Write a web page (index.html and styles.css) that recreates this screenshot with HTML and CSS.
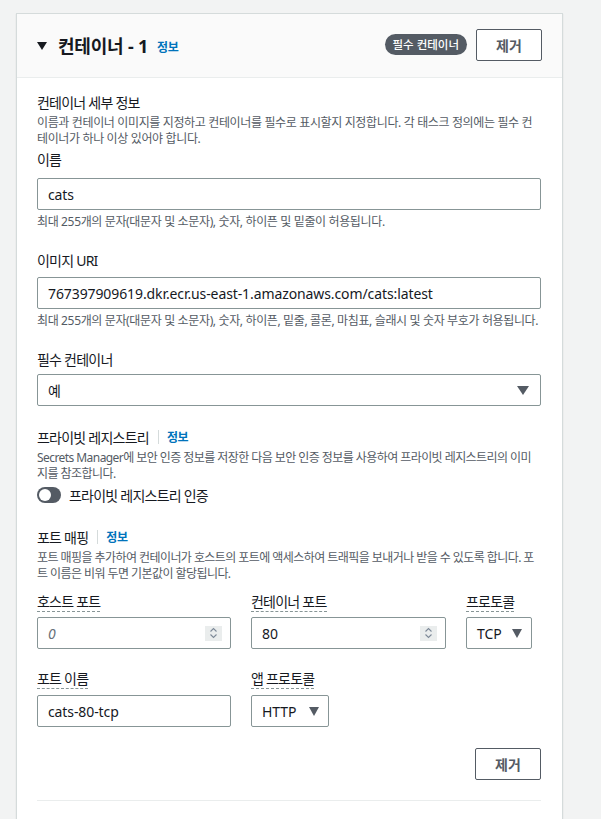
FILE: index.html
```html
<!DOCTYPE html>
<html lang="ko">
<head>
<meta charset="utf-8">
<link rel="stylesheet" href="styles.css">
</head>
<body>
<div class="card">
  <div class="card-header">
    <div class="title-wrap">
      <span class="caret"></span>
      <h2 class="title">컨테이너 - 1</h2>
      <a class="info">정보</a>
    </div>
    <div class="header-actions">
      <span class="badge">필수 컨테이너</span>
      <button class="btn">제거</button>
    </div>
  </div>
  <div class="card-body">
    <h3 class="section-title">컨테이너 세부 정보</h3>
    <p class="desc">이름과 컨테이너 이미지를 지정하고 컨테이너를 필수로 표시할지 지정합니다. 각 태스크 정의에는 필수 컨테이너가 하나 이상 있어야 합니다.</p>

    <label class="label l-name">이름</label>
    <div class="input latin first">cats</div>
    <p class="hint">최대 255개의 문자(대문자 및 소문자), 숫자, 하이픈 및 밑줄이 허용됩니다.</p>

    <label class="label l-field">이미지 URI</label>
    <div class="input latin">767397909619.dkr.ecr.us-east-1.amazonaws.com/cats:latest</div>
    <p class="hint">최대 255개의 문자(대문자 및 소문자), 숫자, 하이픈, 밑줄, 콜론, 마침표, 슬래시 및 숫자 부호가 허용됩니다.</p>

    <label class="label l-field">필수 컨테이너</label>
    <div class="input select tight"><span>예</span><span class="tri"></span></div>

    <div class="label-row l-section">
      <span class="label-text">프라이빗 레지스트리</span>
      <span class="sep"></span>
      <a class="info">정보</a>
    </div>
    <p class="desc desc2">Secrets Manager에 보안 인증 정보를 저장한 다음 보안 인증 정보를 사용하여 프라이빗 레지스트리의 이미지를 참조합니다.</p>
    <div class="toggle-row">
      <span class="toggle"><span class="knob"></span></span>
      <span class="toggle-label">프라이빗 레지스트리 인증</span>
    </div>

    <div class="label-row l-section2">
      <span class="label-text">포트 매핑</span>
      <span class="sep"></span>
      <a class="info">정보</a>
    </div>
    <p class="desc desc2">포트 매핑을 추가하여 컨테이너가 호스트의 포트에 액세스하여 트래픽을 보내거나 받을 수 있도록 합니다. 포트 이름은 비워 두면 기본값이 할당됩니다.</p>

    <div class="port-grid">
      <div class="col">
        <span class="label u">호스트 포트</span>
        <div class="input num latin"><span class="ph">0</span><span class="spin"><svg width="9" height="12" viewBox="0 0 9 12"><path d="M1.5 4.5 L4.5 1.5 L7.5 4.5 M1.5 7.5 L4.5 10.5 L7.5 7.5" fill="none" stroke="#7d8998" stroke-width="1.1"/></svg></span></div>
      </div>
      <div class="col">
        <span class="label u">컨테이너 포트</span>
        <div class="input num latin"><span>80</span><span class="spin"><svg width="9" height="12" viewBox="0 0 9 12"><path d="M1.5 4.5 L4.5 1.5 L7.5 4.5 M1.5 7.5 L4.5 10.5 L7.5 7.5" fill="none" stroke="#7d8998" stroke-width="1.1"/></svg></span></div>
      </div>
      <div class="col">
        <span class="label u">프로토콜</span>
        <div class="input select small latin"><span>TCP</span><span class="tri"></span></div>
      </div>
    </div>

    <div class="port-grid row2">
      <div class="col">
        <span class="label u">포트 이름</span>
        <div class="input latin">cats-80-tcp</div>
      </div>
      <div class="col">
        <span class="label u">앱 프로토콜</span>
        <div class="input select small latin"><span>HTTP</span><span class="tri"></span></div>
      </div>
    </div>

    <div class="actions">
      <button class="btn">제거</button>
    </div>
    <hr class="divider">
  </div>
</div>
</body>
</html>
```

FILE: styles.css
```css
* { box-sizing: border-box; }
html, body {
  margin: 0;
  padding: 0;
}
body {
  background: #f2f3f3;
  font-family: "Noto Sans", "Noto Sans CJK KR", sans-serif;
  color: #16191f;
  font-size: 14px;
  letter-spacing: -0.055em;
  padding: 13px 38px 0 16px;
}
.card {
  background: #ffffff;
  border: 1px solid #d5dbdb;
  border-bottom: none;
  box-shadow: 0 1px 1px rgba(0,28,36,0.15);
  min-height: 820px;
}
.card-header {
  height: 64px;
  background: #fafafa;
  border-bottom: 1px solid #eaeded;
  display: flex;
  align-items: center;
  justify-content: space-between;
  padding: 0 20px 0 20px;
}
.title-wrap {
  display: flex;
  align-items: center;
}
.caret {
  width: 0;
  height: 0;
  border-left: 5px solid transparent;
  border-right: 5px solid transparent;
  border-top: 8px solid #16191f;
  margin-right: 11px;
  margin-top: 1px;
}
.title {
  margin: 0;
  font-size: 18px;
  font-weight: 700;
  line-height: 24px;
  letter-spacing: -0.2px;
}
.info {
  color: #0073bb;
  font-weight: 700;
  font-size: 12px;
  letter-spacing: -0.3px;
  margin-left: 9px;
  margin-top: 2px;
}
.header-actions {
  display: flex;
  align-items: center;
  gap: 9px;
  margin-top: -2px;
}
.badge {
  background: #545b64;
  color: #fff;
  font-size: 11.5px;
  font-weight: 500;
  letter-spacing: 0;
  line-height: 21px;
  height: 21px;
  padding: 0 8px;
  border-radius: 11px;
}
.btn {
  font-family: inherit;
  background: #fff;
  border: 1px solid #545b64;
  border-radius: 2px;
  color: #545b64;
  font-weight: 700;
  font-size: 14px;
  letter-spacing: 0;
  width: 66px;
  height: 32px;
  padding: 0;
}
.card-body {
  padding: 15px 21px 0 20px;
  display: flex;
  flex-direction: column;
}
.section-title {
  margin: 0;
  font-size: 14px;
  font-weight: 400;
  line-height: 20px;
}
.desc, .hint {
  margin: 2px 0 0 0;
  font-size: 12px;
  line-height: 16px;
  letter-spacing: -0.03em;
  color: #545b64;
}
.desc2 { margin-top: 3px; line-height: 16px; letter-spacing: -0.047em; }
.label {
  display: block;
  font-size: 14px;
  line-height: 20px;
  font-weight: 400;
}
.l-name { margin-top: 3px; }
.l-field { margin-top: 21px; }
.input {
  margin-top: 6px;
  height: 32px;
  border: 1px solid #879596;
  border-radius: 2px;
  padding: 0 11px 0 10px;
  display: flex;
  align-items: center;
  font-size: 14px;
  color: #16191f;
}
.input.first { margin-top: 8px; }
.input.tight { margin-top: 4px; }
.latin { letter-spacing: -0.1px; }
.hint { margin-top: 4px; }
.select {
  justify-content: space-between;
}
.tri {
  width: 0;
  height: 0;
  border-left: 6px solid transparent;
  border-right: 6px solid transparent;
  border-top: 9px solid #545b64;
}
.label-row {
  display: flex;
  align-items: center;
  height: 20px;
}
.label-text { font-weight: 400; }
.sep {
  width: 1px;
  height: 14px;
  background: #d5dbdb;
  margin: 0 8px 0 9px;
}
.label-row .info { margin-left: 0; margin-top: 0; }
.l-section { margin-top: 21px; }
.l-section2 { margin-top: 22px; }
.toggle-row {
  display: flex;
  align-items: center;
  height: 20px;
  margin-top: 3px;
}
.toggle {
  width: 24px;
  height: 16px;
  border-radius: 8px;
  background: #545b64;
  position: relative;
  margin-right: 8px;
}
.knob {
  position: absolute;
  left: 2px;
  top: 2px;
  width: 12px;
  height: 12px;
  border-radius: 50%;
  background: #fff;
}
.toggle-label { font-size: 14px; }
.port-grid {
  display: grid;
  grid-template-columns: 194px 195px 66px;
  column-gap: 20px;
  margin-top: 10px;
}
.port-grid.row2 {
  grid-template-columns: 194px 78px;
  column-gap: 20px;
  margin-top: 20px;
}
.col { display: flex; flex-direction: column; align-items: flex-start; }
.col .input { width: 100%; margin-top: 5px; }
.row2 .col .input { margin-top: 6px; }
.label.u {
  display: inline-block;
  line-height: 18px;
  border-bottom: 1px dashed #879596;
  margin-top: 1px;
}
.num { justify-content: space-between; padding-right: 8px; }
.ph { color: #687078; font-style: italic; }
.spin {
  width: 17px;
  height: 15px;
  background: #eaeded;
  display: flex;
  align-items: center;
  justify-content: center;
}
.small { padding: 0 9px 0 10px; }
.small .tri { border-left-width: 5.5px; border-right-width: 5.5px; border-top-width: 9px; }
.actions {
  display: flex;
  justify-content: flex-end;
  margin-top: 21px;
}
.divider {
  margin: 20px 0 0 0;
  border: none;
  border-top: 1px solid #eaeded;
  height: 0;
}
```
